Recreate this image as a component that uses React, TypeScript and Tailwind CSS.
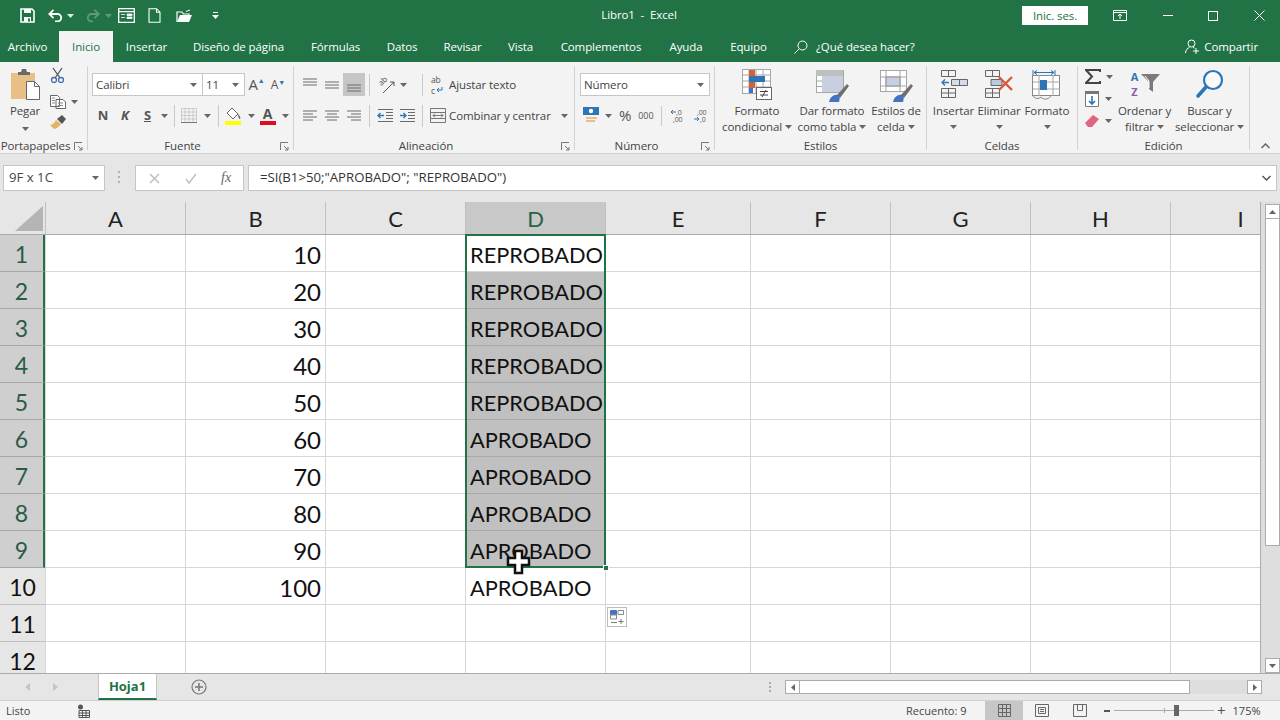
import type { ReactNode } from 'react';

const ui = "font-['Open_Sans','Liberation_Sans',sans-serif]";
const cellFont = "font-['Lato','Liberation_Sans',sans-serif]";

/* ---------- iconos pequeños ---------- */
function Caret({ color = '#666' }: { color?: string }) {
  return (
    <svg width="7" height="4" viewBox="0 0 7 4" className="shrink-0">
      <path d="M0 0h7L3.5 4z" fill={color} />
    </svg>
  );
}

function Launcher() {
  return (
    <svg width="9" height="9" viewBox="0 0 9 9" className="shrink-0">
      <path d="M.5 8V.5H8M4 4l4 4M8 5v3H5" fill="none" stroke="#777" strokeWidth="1" />
    </svg>
  );
}

function Sep({ className = 'h-[23px] mx-[6px]' }: { className?: string }) {
  return <div className={`w-px shrink-0 bg-[#c8c8c8] ${className}`} />;
}

function Lines({ kind }: { kind: 'left' | 'center' | 'right' | 'top' | 'mid' | 'bottom' }) {
  const rows =
    kind === 'left'
      ? ['M1 3h14', 'M1 6h10', 'M1 9h14', 'M1 12h10']
      : kind === 'center'
        ? ['M1 3h14', 'M3 6h10', 'M1 9h14', 'M3 12h10']
        : kind === 'right'
          ? ['M1 3h14', 'M5 6h10', 'M1 9h14', 'M5 12h10']
          : kind === 'top'
            ? ['M1 2h14', 'M1 5h14', 'M1 8h14']
            : kind === 'mid'
              ? ['M1 5h14', 'M1 8h14', 'M1 11h14']
              : ['M1 8h14', 'M1 11h14', 'M1 14h14'];
  return (
    <svg width="16" height="16" viewBox="0 0 16 16">
      <path d={rows.join('')} fill="none" stroke="#6a6a6a" strokeWidth="1" />
    </svg>
  );
}

function Indent({ flip }: { flip?: boolean }) {
  return (
    <svg width="17" height="15" viewBox="0 0 17 15">
      <path d="M1 1.5h15M9 4.5h7M9 7.5h7M9 10.5h7M1 13.5h15" fill="none" stroke="#6a6a6a" />
      {flip ? (
        <path d="M1 7.5h6M4.5 5L7 7.5 4.5 10" fill="none" stroke="#2e75b6" strokeWidth="1.4" />
      ) : (
        <path d="M7 7.5H1M3.5 5L1 7.5 3.5 10" fill="none" stroke="#2e75b6" strokeWidth="1.4" />
      )}
    </svg>
  );
}

function QatIcons() {
  return (
    <div className="flex items-center text-white">
      <div className="ml-[20px] w-[14px]">
        <svg width="15" height="15" viewBox="0 0 15 15">
          <path d="M1 1h11l2 2v11H1z" fill="none" stroke="#fff" strokeWidth="1.6" />
          <path d="M4 1h7v4H4zM4 9h7v5H4z" fill="#fff" />
          <path d="M8 10.5h2v3H8z" fill="#217346" />
        </svg>
      </div>
      <div className="ml-[14px] w-[14px]">
        <svg width="15" height="13" viewBox="0 0 15 13">
          <path d="M2 5h7.5a3.7 3.7 0 010 7.4H7" fill="none" stroke="#fff" strokeWidth="1.8" />
          <path d="M5.5 .8L1.3 5l4.2 4.2" fill="none" stroke="#fff" strokeWidth="1.8" />
        </svg>
      </div>
      <div className="ml-[5px]"><Caret color="#dcebe3" /></div>
      <div className="ml-[11px] w-[14px]">
        <svg width="15" height="13" viewBox="0 0 15 13">
          <path d="M13 5H6.5a3.7 3.7 0 000 7.4H8" fill="none" stroke="#5f9a7d" strokeWidth="1.8" />
          <path d="M9.5 .8L13.7 5 9.5 9.2" fill="none" stroke="#5f9a7d" strokeWidth="1.8" />
        </svg>
      </div>
      <div className="ml-[6px]"><Caret color="#5f9a7d" /></div>
      <div className="ml-[6px]">
        <svg width="17" height="15" viewBox="0 0 17 15">
          <path d="M.7.7h15.6v13.6H.7zM.7 3.7h15.6" fill="none" stroke="#fff" strokeWidth="1.3" />
          <path d="M3 6.5h4M3 9.5h4M9 6h5v1.5H9zM9 9h5v1.5H9z" fill="#fff" stroke="#fff" strokeWidth=".8" />
        </svg>
      </div>
      <div className="ml-[13px]">
        <svg width="13" height="15" viewBox="0 0 13 15">
          <path d="M1 .7h7.5L12 4.2v10H1zM8.5.7v3.5H12" fill="none" stroke="#fff" strokeWidth="1.1" />
        </svg>
      </div>
      <div className="ml-[15px]">
        <svg width="17" height="14" viewBox="0 0 17 14">
          <path d="M1 13V3h5l1.500 2H13v1.500" fill="none" stroke="#fff" strokeWidth="1.2" />
          <path d="M1 13l3-7h12l-3 7z" fill="#fff" />
          <path d="M10 2.500L14 1" fill="none" stroke="#fff" />
        </svg>
      </div>
      <div className="ml-[19px]">
        <svg width="7" height="8" viewBox="0 0 7 8">
          <path d="M1 .5h5" stroke="#fff" />
          <path d="M0 3h7L3.500 7z" fill="#fff" />
        </svg>
      </div>
    </div>
  );
}

/* ---------- iconos grandes ---------- */
function GridBase({ x = 0, y = 0, w = 30, h = 24 }: { x?: number; y?: number; w?: number; h?: number }) {
  const cols = [1, 2, 3].map((n) => x + (w / 4) * n);
  const rows = [1, 2, 3].map((n) => y + (h / 4) * n);
  return (
    <g fill="none" stroke="#a6a6a6" strokeWidth="1">
      <rect x={x + 0.5} y={y + 0.5} width={w} height={h} fill="#fff" />
      {cols.map((c) => <path key={c} d={`M${c} ${y}v${h}`} />)}
      {rows.map((r) => <path key={r} d={`M${x} ${r}h${w}`} />)}
    </g>
  );
}

function BrushMark() {
  return (
    <g>
      <path d="M22 26l10-11 2 2-9 12z" fill="#6f6f6f" />
      <path d="M14 33c1-5 5-8 9-7 2 1 2 4 1 7z" fill="#4472c4" />
    </g>
  );
}

const bigIcons: Record<string, ReactNode> = {
  cond: (
    <svg width="32" height="32" viewBox="0 0 32 32">
      <GridBase x={1} y={0} w={28} h={24} />
      <path d="M8 1h6v6H8zM8 13h6v6H8z" fill="#d2603a" />
      <path d="M8 7h16v6H8z" fill="#2e75b6" />
      <path d="M8 19h4v5H8z" fill="#4472c4" />
      <rect x="15.500" y="18.500" width="15" height="12" fill="#fff" stroke="#666" />
      <path d="M19 22.500h8M19 26h8M25 21l-4 7" stroke="#444" fill="none" />
    </svg>
  ),
  table: (
    <svg width="34" height="34" viewBox="0 0 34 34">
      <GridBase x={1} y={1} w={27} h={22} />
      <path d="M7 7h21v16H7z" fill="#c7cfe0" />
      <path d="M1 1h27v6H1z" fill="#bfbfbf" />
      <BrushMark />
    </svg>
  ),
  styles: (
    <svg width="34" height="34" viewBox="0 0 34 34">
      <rect x="1.500" y="1.500" width="26" height="21" fill="#fff" stroke="#a6a6a6" />
      <path d="M1 8h27M1 17h27M7 1v22M21 1v22" stroke="#a6a6a6" />
      <path d="M7 8h14v9H7z" fill="#c7cfe0" stroke="#8e8e8e" />
      <BrushMark />
    </svg>
  ),
  insert: (
    <svg width="30" height="30" viewBox="0 0 30 30">
      <path d="M2.500 1.500h14v6h-14zM9.500 1.500v6M2.500 19.500h14v9h-14zM2.500 24h14M9.500 19.500v9" fill="none" stroke="#666" />
      <path d="M12.500 10.500h16v6h-16zM20.500 10.500v6" fill="#d5dbe8" stroke="#666" />
      <path d="M10 13.500H3M6 10.500l-3 3 3 3" fill="none" stroke="#2e75b6" strokeWidth="1.400" />
    </svg>
  ),
  remove: (
    <svg width="32" height="30" viewBox="0 0 32 30">
      <path d="M2.500 1.500h14v6h-14zM9.500 1.500v6M2.500 19.500h14v9h-14zM2.500 24h14M9.500 19.500v9" fill="none" stroke="#666" />
      <path d="M8 10.500h11v6H8z" fill="#bcc8dc" stroke="#666" />
      <path d="M16 8l13 13M29 8L16 21" stroke="#d9573a" strokeWidth="2.400" fill="none" />
    </svg>
  ),
  format: (
    <svg width="30" height="32" viewBox="0 0 30 32">
      <path d="M1 1v5M23 1v5M2 3.500h20M2 3.500l3-2M2 3.500l3 2M22 3.500l-3-2M22 3.500l-3 2" fill="none" stroke="#2e75b6" />
      <rect x=".5" y="6.500" width="27" height="20" fill="#fff" stroke="#888" />
      <path d="M7 6v21M21 6v21M1 13h27M1 20h27" stroke="#a6a6a6" />
      <path d="M8 11h7v10H8z" fill="#2e75b6" />
      <path d="M1 27c2 3 6 3 8 1 2 3 7 3 10-1" fill="none" stroke="#888" />
    </svg>
  ),
  sort: (
    <div className="flex h-[30px] w-[32px] items-center">
      <div className="flex w-[12px] flex-col items-center text-[11px] font-bold leading-[15px]">
        <span className="text-[#2e75b6]">A</span>
        <span className="text-[#8e5bae]">Z</span>
      </div>
      <svg width="20" height="20" viewBox="11 9 20 20">
        <path d="M11 9h19l-7 8v10l-4-3v-7z" fill="#7a7a7a" />
        <path d="M15 11l4 5v7" fill="none" stroke="#fff" />
      </svg>
    </div>
  ),
  search: (
    <svg width="30" height="30" viewBox="0 0 30 30">
      <circle cx="18" cy="11" r="9" fill="#fff" fillOpacity=".6" stroke="#2e75b6" strokeWidth="2.200" />
      <path d="M11 18L3 27" stroke="#2e75b6" strokeWidth="3.600" strokeLinecap="round" />
    </svg>
  ),
};

function BigButton({
  width, icon, line1, line2, caretBelow,
}: {
  width: string; icon: string; line1: string; line2?: string; caretBelow?: boolean;
}) {
  return (
    <div className={`flex shrink-0 flex-col items-center whitespace-nowrap ${width}`}>
      <div className="flex h-[34px] items-start justify-center">{bigIcons[icon]}</div>
      <div className="flex h-[16px] items-center">{line1}</div>
      <div className="flex h-[16px] items-center gap-[3px]">
        {line2}
        {line2 || caretBelow ? <Caret /> : null}
      </div>
    </div>
  );
}

function Group({
  width, label, launcher, children,
}: {
  width: string; label: string; launcher?: boolean; children: ReactNode;
}) {
  return (
    <div className={`flex h-[84px] shrink-0 flex-col border-r border-[#d2d2d2] ${width}`}>
      <div className="h-[72px] shrink-0">{children}</div>
      <div className="flex h-[16px] shrink-0 items-center">
        <div className="flex-1 whitespace-nowrap text-center">{label}</div>
        {launcher ? <div className="flex w-[16px] justify-start pl-[3px]"><Launcher /></div> : null}
      </div>
    </div>
  );
}

function Combo({ text, width }: { text: string; width: string }) {
  return (
    <div className={`flex h-[23px] shrink-0 items-center justify-between border border-[#c6c6c6] bg-white pl-[3px] pr-[5px] ${width}`}>
      <span>{text}</span>
      <Caret />
    </div>
  );
}

function Ribbon() {
  return (
    <div className={`flex h-[92px] border-b border-[#d0d0d0] bg-[#f3f3f3] pt-[4px] text-[11.5px] leading-none tracking-[-0.1px] text-[#444] ${ui}`}>
      {/* Portapapeles */}
      <Group width="w-[88px]" label="Portapapeles" launcher>
        <div className="flex">
          <div className="flex w-[50px] flex-col items-center">
            <svg width="30" height="32" viewBox="0 0 30 32" className="ml-[2px] mt-[3px]">
              <path d="M0 4h24v26H0z" fill="#e8bf85" />
              <path d="M7 5V3h3l1-3h4l1 3h3v3H7z" fill="#6a6a6a" />
              <path d="M15.500 12.500h8l5 5v13h-13z" fill="#fff" stroke="#666" />
              <path d="M23.500 12.500v5h5" fill="none" stroke="#666" />
            </svg>
            <div className="mt-[4px]">Pegar</div>
            <div className="mt-[10px]"><Caret /></div>
          </div>
          <div className="flex flex-col">
            <div className="h-[22px] pt-[1px]">
              <svg width="15" height="16" viewBox="0 0 15 16">
                <path d="M3 1l7 10M12 1L5 11" stroke="#555" strokeWidth="1.300" fill="none" />
                <circle cx="4" cy="13" r="2.500" fill="none" stroke="#3f6fa8" strokeWidth="1.300" />
                <circle cx="11" cy="13" r="2.500" fill="none" stroke="#3f6fa8" strokeWidth="1.300" />
              </svg>
            </div>
            <div className="flex h-[24px] items-center gap-[5px] pt-[3px]">
              <svg width="16" height="14" viewBox="0 0 16 14">
                <path d="M.5.500h7l2 2v9h-9zM6 4.500h7l2.500 2.500v6.500H6z" fill="#fff" stroke="#666" />
                <path d="M2 3h3M2 5.500h3M2 8h3M8 8h5M8 10.500h5" stroke="#888" />
              </svg>
              <Caret />
            </div>
            <div className="mt-[3px]">
              <svg width="16" height="15" viewBox="0 0 16 15">
                <path d="M0 10c3 0 5-3 6-5l5 4c-2 2-4 5-7 5z" fill="#e3b45f" />
                <path d="M7 4l5-4 4 4-4 5z" fill="#555" />
              </svg>
            </div>
          </div>
        </div>
      </Group>

      {/* Fuente */}
      <Group width="w-[206px]" label="Fuente" launcher>
        <div className="flex flex-col gap-[8px] pl-[4px] pt-[7px]">
          <div className="flex h-[23px] items-center">
            <Combo text="Calibri" width="w-[111px]" />
            <Combo text="11" width="w-[43px] ml-[-1px]" />
            <div className="flex w-[23px] items-start justify-center text-[15px] text-[#555]">A<span className="text-[7px] text-[#2e75b6]">▲</span></div>
            <div className="flex w-[20px] items-start justify-center text-[12px] text-[#555]">A<span className="text-[7px] text-[#2e75b6]">▼</span></div>
          </div>
          <div className="flex h-[23px] items-center text-[13px] font-bold text-[#555]">
            <div className="w-[22px] text-center">N</div>
            <div className="w-[22px] text-center italic">K</div>
            <div className="w-[23px] text-center underline">S</div>
            <div className="flex w-[10px] justify-center"><Caret /></div>
            <Sep className="ml-[5px] mr-[6px] h-[22px]" />
            <svg width="16" height="15" viewBox="0 0 16 15">
              <path d="M.5.500h15v14H.5zM8 .500v14M.5 7.500h15M4 .500v14M12 .500v14M.5 4h15M.5 11h15" fill="none" stroke="#aaa" strokeDasharray="1 1" />
              <path d="M0 14.500h16" stroke="#777" />
            </svg>
            <div className="ml-[5px] flex w-[10px] justify-center"><Caret /></div>
            <Sep className="ml-[6px] mr-[6px] h-[22px]" />
            <svg width="17" height="18" viewBox="0 0 17 18">
              <path d="M7 1l6 6-5 5-6-6z" fill="#fff" stroke="#666" />
              <path d="M13 7c2 2 3 4 2 5-1 0-2-2-2-5z" fill="#666" />
              <path d="M0 14h16v4H0z" fill="#ffff00" />
            </svg>
            <div className="ml-[4px] flex w-[10px] justify-center"><Caret /></div>
            <div className="ml-[3px] flex h-[18px] w-[17px] flex-col items-center text-[14px] leading-[13px]">
              A
              <div className="mt-[1px] h-[4px] w-[16px] bg-[#e00b1c]" />
            </div>
            <div className="ml-[4px] flex w-[10px] justify-center"><Caret /></div>
          </div>
        </div>
      </Group>

      {/* Alineación */}
      <Group width="w-[281px]" label="Alineación" launcher>
        <div className="flex flex-col gap-[8px] pt-[7px]">
          <div className="flex h-[23px] items-center pl-[5px]">
            <div className="flex w-[22px] justify-center"><Lines kind="top" /></div>
            <div className="flex w-[22px] justify-center"><Lines kind="mid" /></div>
            <div className="flex h-[23px] w-[22px] items-center justify-center bg-[#c6c6c6]"><Lines kind="bottom" /></div>
            <Sep className="ml-[4px] mr-[7px] h-[22px]" />
            {/* orientación */}
            <div className="relative h-[18px] w-[18px]">
              <span className="absolute left-[1px] top-[0px] -rotate-45 text-[8px] leading-[10px] text-[#555]">ab</span>
              <svg width="18" height="18" viewBox="0 0 18 18">
                <path d="M6 17L17 6M13 6h4v4" fill="none" stroke="#555" />
              </svg>
            </div>
            <div className="ml-[3px] flex w-[10px] justify-center"><Caret /></div>
            <Sep className="ml-[14px] mr-[8px] h-[22px]" />
            {/* ajustar texto */}
            <div className="flex h-[22px] w-[15px] flex-col text-[8.5px] leading-[11px] text-[#555]">
              <span>ab</span>
              <div className="flex items-center gap-[1px]">
                <span>c</span>
                <svg width="7" height="6" viewBox="0 0 7 6">
                  <path d="M6 0v3H1M3 1L1 3l2 2" fill="none" stroke="#2e75b6" />
                </svg>
              </div>
            </div>
            <span className="ml-[3px] whitespace-nowrap">Ajustar texto</span>
          </div>
          <div className="flex h-[23px] items-center pl-[5px]">
            <div className="flex w-[22px] justify-center"><Lines kind="left" /></div>
            <div className="flex w-[22px] justify-center"><Lines kind="center" /></div>
            <div className="flex w-[22px] justify-center"><Lines kind="right" /></div>
            <Sep className="ml-[4px] mr-[7px] h-[22px]" />
            <Indent />
            <div className="ml-[5px]"><Indent flip /></div>
            <Sep className="ml-[6px] mr-[7px] h-[22px]" />
            <svg width="16" height="15" viewBox="0 0 16 15">
              <path d="M.5.500h15v14H.5zM.5 4.500h15M.5 10.500h15" fill="none" stroke="#777" />
              <path d="M3 7.500h10M5 5.500l-2 2 2 2M11 5.500l2 2-2 2" fill="none" stroke="#777" />
            </svg>
            <span className="ml-[3px] whitespace-nowrap">Combinar y centrar</span>
            <div className="ml-[10px]"><Caret /></div>
          </div>
        </div>
      </Group>

      {/* Número */}
      <Group width="w-[140px]" label="Número" launcher>
        <div className="flex flex-col gap-[8px] pl-[5px] pt-[7px]">
          <Combo text="Número" width="w-[130px]" />
          <div className="flex h-[23px] items-center text-[#555]">
            <svg width="17" height="17" viewBox="0 0 17 17" className="ml-[3px]">
              <path d="M0 0h16v8H0z" fill="#2e75b6" />
              <circle cx="8" cy="4" r="2.200" fill="#fff" />
              <path d="M3 10h11v2H3zM3 13h9v2H3z" fill="#e8bf85" />
            </svg>
            <div className="ml-[5px]"><Caret /></div>
            <span className="ml-[7px] text-[15px]">%</span>
            <span className="ml-[7px] text-[9px]">000</span>
            <Sep className="ml-[8px] mr-[8px] h-[20px]" />
            <svg width="17" height="15" viewBox="0 0 17 15">
              <text x="6" y="7" fontSize="7" fill="#555" fontFamily="Open Sans, sans-serif">,0</text>
              <text x="3" y="14" fontSize="7" fill="#555" fontFamily="Open Sans, sans-serif">,00</text>
              <path d="M6 4H1M3 2L1 4l2 2" fill="none" stroke="#2e75b6" />
            </svg>
            <svg width="17" height="15" viewBox="0 0 17 15" className="ml-[6px]">
              <text x="4" y="7" fontSize="7" fill="#555" fontFamily="Open Sans, sans-serif">,00</text>
              <text x="7" y="14" fontSize="7" fill="#555" fontFamily="Open Sans, sans-serif">,0</text>
              <path d="M1 11h5M4 9l2 2-2 2" fill="none" stroke="#2e75b6" />
            </svg>
          </div>
        </div>
      </Group>

      {/* Estilos */}
      <Group width="w-[212px]" label="Estilos">
        <div className="flex pl-[4px] pt-[3px]">
          <BigButton width="w-[76px]" icon="cond" line1="Formato" line2="condicional" />
          <BigButton width="w-[74px]" icon="table" line1="Dar formato" line2="como tabla" />
          <BigButton width="w-[54px]" icon="styles" line1="Estilos de" line2="celda" />
        </div>
      </Group>

      {/* Celdas */}
      <Group width="w-[151px]" label="Celdas">
        <div className="flex pl-[3px] pt-[3px]">
          <BigButton width="w-[47px]" icon="insert" line1="Insertar" caretBelow />
          <BigButton width="w-[44px]" icon="remove" line1="Eliminar" caretBelow />
          <BigButton width="w-[52px]" icon="format" line1="Formato" caretBelow />
        </div>
      </Group>

      {/* Edición */}
      <Group width="w-[172px]" label="Edición">
        <div className="flex">
          <div className="flex w-[37px] flex-col pl-[7px]">
            <div className="flex h-[21px] items-center gap-[5px]">
              <svg width="16" height="15" viewBox="0 0 16 15">
                <path d="M15 3V1H1l6 6.500L1 14h14v-2" fill="none" stroke="#444" strokeWidth="2" />
              </svg>
              <Caret />
            </div>
            <div className="flex h-[24px] items-center gap-[6px]">
              <svg width="14" height="16" viewBox="0 0 14 16">
                <path d="M.5.500h13v15H.5z" fill="#fff" stroke="#777" />
                <path d="M0 0h14v3H0z" fill="#777" />
                <path d="M7 5v8M4 10l3 3 3-3" fill="none" stroke="#2e75b6" strokeWidth="1.600" />
              </svg>
              <Caret />
            </div>
            <div className="flex h-[20px] items-center gap-[6px]">
              <svg width="14" height="12" viewBox="0 0 14 12">
                <path d="M0 8l8-8 6 4-7 8H3z" fill="#e0637f" />
              </svg>
              <Caret />
            </div>
          </div>
          <div className="flex pt-[3px]">
            <BigButton width="w-[59px]" icon="sort" line1="Ordenar y" line2="filtrar" />
            <BigButton width="w-[71px]" icon="search" line1="Buscar y" line2="seleccionar" />
          </div>
        </div>
      </Group>

      <div className="flex h-[88px] flex-1 items-end justify-center pb-[5px]">
        <svg width="9" height="6" viewBox="0 0 9 6">
          <path d="M.5 5l4-4 4 4" fill="none" stroke="#666" strokeWidth="1.500" />
        </svg>
      </div>
    </div>
  );
}

const tabs = [
  ['Archivo', 'w-[41px] ml-[7px]'],
  ['Inicio', 'w-[54px] ml-[11px] bg-[#f3f3f3] text-[#217346]'],
  ['Insertar', 'w-[39px] ml-[14px]'],
  ['Diseño de página', 'w-[91px] ml-[27px]'],
  ['Fórmulas', 'w-[49px] ml-[27px]'],
  ['Datos', 'w-[30px] ml-[27px]'],
  ['Revisar', 'w-[37px] ml-[27px]'],
  ['Vista', 'w-[25px] ml-[27px]'],
  ['Complementos', 'w-[82px] ml-[27px]'],
  ['Ayuda', 'w-[34px] ml-[27px]'],
  ['Equipo', 'w-[37px] ml-[27px]'],
];

function TitleBar() {
  return (
    <div className={`bg-[#217346] text-[11.5px] leading-none tracking-[-0.1px] text-white ${ui}`}>
      <div className="flex h-[31px] items-center">
        <div className="w-[300px]"><QatIcons /></div>
        <div className="w-[678px] whitespace-pre pb-[2px] text-center">Libro1  -  Excel</div>
        <div className="flex w-[302px] items-center">
          <div className="ml-[44px] flex h-[19px] w-[66px] items-center justify-center bg-white text-[#217346]">Inic. ses.</div>
          <svg width="14" height="11" viewBox="0 0 14 11" className="ml-[25px]">
            <path d="M.5.500h13v10H.5zM.5 2.500h13M7 9V4.500M5 6l2-2 2 2" fill="none" stroke="#fff" />
          </svg>
          <div className="ml-[36px] h-px w-[10px] bg-white" />
          <div className="ml-[35px] h-[10px] w-[10px] border border-white" />
          <svg width="11" height="11" viewBox="0 0 11 11" className="ml-[36px]">
            <path d="M.5.500l10 10M10.500.500l-10 10" stroke="#fff" fill="none" />
          </svg>
        </div>
      </div>
      <div className="flex h-[31px] items-stretch">
        {tabs.map(([name, cls]) => (
          <div key={name} className={`flex items-center justify-center whitespace-nowrap ${cls}`}>{name}</div>
        ))}
        <div className="ml-[27px] flex items-center">
          <svg width="14" height="14" viewBox="0 0 14 14">
            <circle cx="8.500" cy="5.500" r="4.500" fill="none" stroke="#fff" />
            <path d="M5 9l-4.500 4.500" stroke="#fff" />
          </svg>
        </div>
        <div className="ml-[8px] flex items-center whitespace-nowrap">¿Qué desea hacer?</div>
        <div className="ml-auto flex items-center pr-[22px]">
          <svg width="15" height="15" viewBox="0 0 15 15">
            <circle cx="6.500" cy="4.500" r="3.500" fill="none" stroke="#fff" />
            <path d="M.5 14c0-3 2-5 4-5.500M8 8.500l1.500.5M11 9v6M8 12h6" fill="none" stroke="#fff" />
          </svg>
          <span className="ml-[4px]">Compartir</span>
        </div>
      </div>
    </div>
  );
}

function FormulaBar() {
  return (
    <div className={`flex h-[48px] items-start bg-[#e6e6e6] pt-[11px] text-[13.2px] leading-none text-[#444] ${ui}`}>
      <div className="ml-[3px] flex h-[26px] w-[102px] items-center justify-between border border-[#c6c6c6] bg-white pl-[5px] pr-[5px]">
        <span>9F x 1C</span>
        <Caret />
      </div>
      <div className="ml-[13px] mt-[6px] flex flex-col gap-[3px]">
        <div className="h-[2px] w-[2px] bg-[#b0b0b0]" />
        <div className="h-[2px] w-[2px] bg-[#b0b0b0]" />
        <div className="h-[2px] w-[2px] bg-[#b0b0b0]" />
      </div>
      <div className="ml-[15px] flex h-[26px] w-[109px] items-center border border-[#c6c6c6] bg-white">
        <svg width="11" height="11" viewBox="0 0 11 11" className="ml-[13px]">
          <path d="M1 1l9 9M10 1l-9 9" stroke="#c0c0c0" strokeWidth="1.500" />
        </svg>
        <svg width="12" height="11" viewBox="0 0 12 11" className="ml-[25px]">
          <path d="M1 6l3 4 7-9" fill="none" stroke="#c0c0c0" strokeWidth="1.500" />
        </svg>
        <span className="ml-[24px] font-['Liberation_Serif',serif] text-[14px] italic text-[#666]">fx</span>
      </div>
      <div className="ml-[4px] mr-[3px] flex h-[26px] flex-1 items-center justify-between border border-[#c6c6c6] bg-white pl-[11px] pr-[5px]">
        <span className="text-[#333]">=SI(B1&gt;50;"APROBADO"; "REPROBADO")</span>
        <svg width="9" height="6" viewBox="0 0 9 6">
          <path d="M.5 1l4 4 4-4" fill="none" stroke="#555" strokeWidth="1.500" />
        </svg>
      </div>
    </div>
  );
}

/* ---------- hoja ---------- */
const columns = [
  ['A', 'w-[140px]'],
  ['B', 'w-[140px]'],
  ['C', 'w-[140px]'],
  ['D', 'w-[140px]'],
  ['E', 'w-[145px]'],
  ['F', 'w-[140px]'],
  ['G', 'w-[140px]'],
  ['H', 'w-[140px]'],
  ['I', 'w-[140px]'],
];

const rows = [
  [1, 10, 'REPROBADO'], [2, 20, 'REPROBADO'], [3, 30, 'REPROBADO'], [4, 40, 'REPROBADO'],
  [5, 50, 'REPROBADO'], [6, 60, 'APROBADO'], [7, 70, 'APROBADO'], [8, 80, 'APROBADO'],
  [9, 90, 'APROBADO'], [10, 100, 'APROBADO'], [11, '', ''], [12, '', ''],
] as const;

function Sheet() {
  return (
    <div className={`relative w-[1261px] shrink-0 overflow-hidden border-r border-[#ababab] ${cellFont}`}>
      {/* cabecera de columnas */}
      <div className="flex h-[33px] border-b border-[#ababab] bg-[#e6e6e6]">
        <div className="flex w-[45px] shrink-0 items-end justify-end pb-[3px] pr-[2px]">
          <svg width="28" height="25" viewBox="0 0 28 25">
            <path d="M28 0v25H0z" fill="#b4b4b4" />
          </svg>
        </div>
        {columns.map(([name, w]) => (
          <div
            key={name}
            className={`flex shrink-0 items-center justify-center border-l border-[#c0c0c0] text-[22px] ${w} ${name === 'D' ? 'bg-[#c8c8c8] text-[#2b6049]' : 'text-[#222]'}`}
          >
            {name}
          </div>
        ))}
      </div>

      {rows.map(([num, val, res]) => {
        const inSel = num <= 9;
        return (
          <div key={num} className="flex h-[37px] bg-white leading-none text-[#111]">
            <div className={`flex w-[45px] shrink-0 items-center justify-center border-b pt-[2px] text-[23px] ${inSel ? 'border-b-[#a8a8a8] border-r-2 border-r-[#217346] bg-[#cfcfcf] text-[#2b5a48]' : 'border-b-[#c0c0c0] bg-[#e6e6e6]'}`}>
              {num}
            </div>
            {columns.map(([name, w]) => (
              <div
                key={name}
                className={`flex shrink-0 items-center border-b border-l pt-[3px] ${w} ${name === 'B' ? 'justify-end pr-[4px] text-[24px]' : 'pl-[4px] text-[21.8px]'} ${name === 'D' && inSel && num > 1 ? 'border-b-[#a8a8a8] bg-[#c0c0c0] border-l-[#d6d6d6]' : 'border-[#d6d6d6]'}`}
              >
                {name === 'B' ? val : name === 'D' ? res : ''}
              </div>
            ))}
          </div>
        );
      })}

      {/* selección D1:D9 */}
      <div className="absolute left-[465px] top-[32px] h-[334px] w-[141px] border-2 border-[#217346]" />
      <div className="absolute left-[603px] top-[363px] h-[6px] w-[6px] border border-white bg-[#217346]" />
      {/* cursor */}
      <svg width="26" height="26" viewBox="0 0 26 26" className="absolute left-[506px] top-[347px]">
        <path d="M9 2h7v7h7v7h-7v8H9v-8H2V9h7z" fill="#fff" stroke="#111" strokeWidth="2.500" />
      </svg>
      {/* opciones de relleno */}
      <div className="absolute left-[607px] top-[405px] flex h-[20px] w-[20px] items-center justify-center border border-[#bdbdbd] bg-white">
        <svg width="14" height="14" viewBox="0 0 14 14">
          <path d="M.5.500h6v4h-6z" fill="#4472c4" stroke="#4472c4" />
          <path d="M.5 5h6v4h-6zM8 .500h5.500v4H8z" fill="none" stroke="#888" />
          <path d="M1 12.500h6M11 9v5M8.500 11.500h5" stroke="#777" fill="none" />
        </svg>
      </div>
    </div>
  );
}

function VScroll() {
  return (
    <div className="flex w-[19px] shrink-0 flex-col items-center bg-[#dedede] pl-[3px] pt-[2px] pb-0">
      <div className="flex h-[15px] w-[15px] items-center justify-center border border-[#ababab] bg-white">
        <svg width="7" height="4" viewBox="0 0 7 4"><path d="M0 4h7L3.500 0z" fill="#666" /></svg>
      </div>
      <div className="h-[327px] w-[15px] border-x border-b border-[#ababab] bg-white" />
      <div className="flex-1" />
      <div className="flex h-[15px] w-[15px] items-center justify-center border border-[#ababab] bg-white">
        <Caret />
      </div>
    </div>
  );
}

function SheetTabs() {
  return (
    <div className={`flex h-[27px] items-stretch border-t border-[#ababab] bg-[#e6e6e6] text-[13px] leading-none ${ui}`}>
      <div className="flex items-center pl-[25px]">
        <svg width="5" height="8" viewBox="0 0 5 8"><path d="M5 0v8L0 4z" fill="#c4c4c4" /></svg>
        <svg width="5" height="8" viewBox="0 0 5 8" className="ml-[23px]"><path d="M0 0v8l5-4z" fill="#c4c4c4" /></svg>
      </div>
      <div className="ml-[40px] flex w-[59px] items-center justify-center border-x border-b-2 border-x-[#c6c6c6] border-b-[#217346] bg-white font-bold text-[#217346]">
        Hoja1
      </div>
      <div className="ml-[34px] flex items-center">
        <svg width="16" height="16" viewBox="0 0 16 16">
          <circle cx="8" cy="8" r="7" fill="none" stroke="#777" strokeWidth="1.200" />
          <path d="M8 4v8M4 8h8" stroke="#777" strokeWidth="1.500" />
        </svg>
      </div>
      <div className="ml-[562px] flex items-center gap-[2px]">
        <div className="flex flex-col gap-[2px]">
          <div className="h-[2px] w-[2px] bg-[#aaa]" />
          <div className="h-[2px] w-[2px] bg-[#aaa]" />
          <div className="h-[2px] w-[2px] bg-[#aaa]" />
        </div>
      </div>
      <div className="ml-[14px] flex items-center">
        <div className="flex h-[14px] w-[15px] items-center justify-center border border-[#ababab] bg-white">
          <svg width="4" height="7" viewBox="0 0 4 7"><path d="M4 0v7L0 3.500z" fill="#666" /></svg>
        </div>
        <div className="h-[14px] w-[390px] border border-l-0 border-[#ababab] bg-white" />
        <div className="h-[14px] w-[57px] bg-[#dedede]" />
        <div className="flex h-[14px] w-[15px] items-center justify-center border border-[#ababab] bg-white">
          <svg width="4" height="7" viewBox="0 0 4 7"><path d="M0 0v7l4-3.500z" fill="#666" /></svg>
        </div>
      </div>
    </div>
  );
}

function StatusBar() {
  return (
    <div className={`flex h-[20px] items-center border-t border-[#d0d0d0] bg-[#f3f3f3] text-[11px] leading-none text-[#444] ${ui}`}>
      <span className="ml-[6px] w-[71px]">Listo</span>
      <svg width="13" height="14" viewBox="0 0 13 14">
        <circle cx="3.500" cy="3" r="2.500" fill="#555" />
        <path d="M2 6.500h10.500v7H2zM2 9h10.500M2 11.500h10.500M5.500 6.500v7M9 6.500v7" fill="none" stroke="#555" />
      </svg>
      <span className="ml-[816px] w-[79px] whitespace-nowrap">Recuento: 9</span>
      <div className="flex h-[19px] w-[38px] items-center justify-center bg-[#c6c6c6]">
        <svg width="13" height="13" viewBox="0 0 13 13">
          <path d="M.5.500h12v12H.5zM4.500.500v12M8.500.500v12M.5 4.500h12M.5 8.500h12" fill="none" stroke="#666" />
        </svg>
      </div>
      <svg width="14" height="13" viewBox="0 0 14 13" className="ml-[12px]">
        <path d="M.5.500h13v12H.5zM3.500 3.500h7v6h-7zM5 5.500h4M5 7.500h4" fill="none" stroke="#666" />
      </svg>
      <svg width="14" height="13" viewBox="0 0 14 13" className="ml-[24px]">
        <path d="M.5.500h13v12H.5zM4.500.500v6h5v-6" fill="none" stroke="#666" />
      </svg>
      <div className="ml-[17px] h-[2px] w-[6px] bg-[#555]" />
      <div className="relative ml-[4px] h-px w-[100px] bg-[#aaa]">
        <div className="absolute left-[50px] top-[-2px] h-[5px] w-px bg-[#aaa]" />
        <div className="absolute left-[60px] top-[-5px] h-[11px] w-[5px] bg-[#666]" />
      </div>
      <span className="ml-[3px] text-[15px] leading-none text-[#555]">+</span>
      <span className="ml-[7px] whitespace-nowrap">175%</span>
    </div>
  );
}

export default function App() {
  return (
    <div className="flex h-[720px] w-[1280px] flex-col overflow-hidden bg-[#e6e6e6]">
      <TitleBar />
      <Ribbon />
      <FormulaBar />
      <div className="flex h-[471px] min-h-0 bg-[#e6e6e6]">
        <Sheet />
        <VScroll />
      </div>
      <SheetTabs />
      <StatusBar />
    </div>
  );
}
